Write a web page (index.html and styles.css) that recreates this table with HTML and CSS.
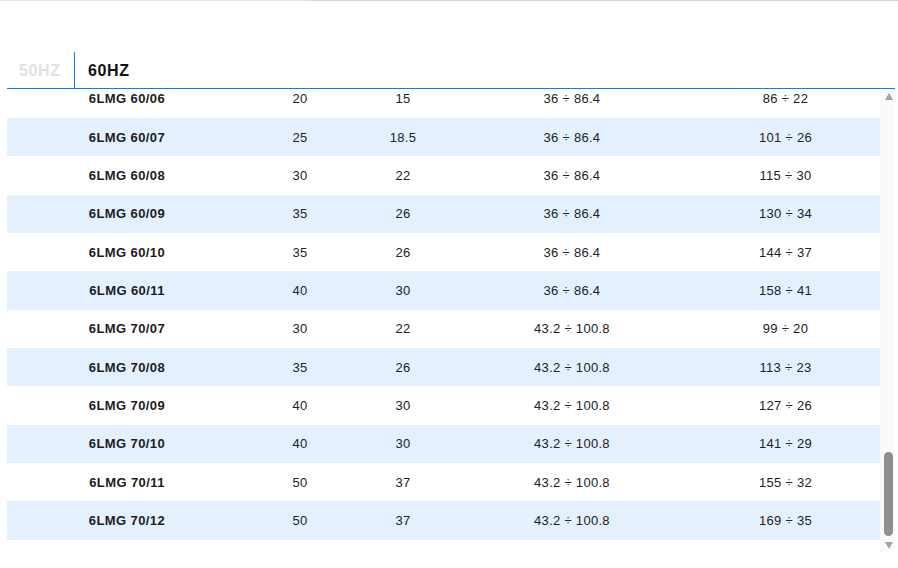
FILE: index.html
```html
<!DOCTYPE html>
<html>
<head>
<meta charset="utf-8">
<link rel="stylesheet" href="styles.css">
</head>
<body>
<div class="topbar"><div class="topbar-a"></div><div class="topbar-b"></div></div>
<div class="panel">
  <div class="tabs">
    <div class="tab tab-off">50HZ</div>
    <div class="tab tab-on">60HZ</div>
  </div>
  <div class="body">
    <div class="viewport">
      <table class="grid">
        <colgroup><col class="c1"><col class="c2"><col class="c3"><col class="c4"><col class="c5"></colgroup>
        <tbody>
          <tr><td class="name">6LMG 60/06</td><td>20</td><td>15</td><td>36 ÷ 86.4</td><td>86 ÷ 22</td></tr>
          <tr class="alt"><td class="name">6LMG 60/07</td><td>25</td><td>18.5</td><td>36 ÷ 86.4</td><td>101 ÷ 26</td></tr>
          <tr><td class="name">6LMG 60/08</td><td>30</td><td>22</td><td>36 ÷ 86.4</td><td>115 ÷ 30</td></tr>
          <tr class="alt"><td class="name">6LMG 60/09</td><td>35</td><td>26</td><td>36 ÷ 86.4</td><td>130 ÷ 34</td></tr>
          <tr><td class="name">6LMG 60/10</td><td>35</td><td>26</td><td>36 ÷ 86.4</td><td>144 ÷ 37</td></tr>
          <tr class="alt"><td class="name">6LMG 60/11</td><td>40</td><td>30</td><td>36 ÷ 86.4</td><td>158 ÷ 41</td></tr>
          <tr><td class="name">6LMG 70/07</td><td>30</td><td>22</td><td>43.2 ÷ 100.8</td><td>99 ÷ 20</td></tr>
          <tr class="alt"><td class="name">6LMG 70/08</td><td>35</td><td>26</td><td>43.2 ÷ 100.8</td><td>113 ÷ 23</td></tr>
          <tr><td class="name">6LMG 70/09</td><td>40</td><td>30</td><td>43.2 ÷ 100.8</td><td>127 ÷ 26</td></tr>
          <tr class="alt"><td class="name">6LMG 70/10</td><td>40</td><td>30</td><td>43.2 ÷ 100.8</td><td>141 ÷ 29</td></tr>
          <tr><td class="name">6LMG 70/11</td><td>50</td><td>37</td><td>43.2 ÷ 100.8</td><td>155 ÷ 32</td></tr>
          <tr class="alt"><td class="name">6LMG 70/12</td><td>50</td><td>37</td><td>43.2 ÷ 100.8</td><td>169 ÷ 35</td></tr>
        </tbody>
      </table>
    </div>
    <div class="scrollbar">
      <div class="arrow arrow-up"></div>
      <div class="track"><div class="thumb"></div></div>
      <div class="arrow arrow-down"></div>
    </div>
  </div>
</div>
</body>
</html>
```
FILE: styles.css
```css
html, body {
  margin: 0;
  padding: 0;
  background: #ffffff;
}
body {
  font-family: "Liberation Sans", Arial, sans-serif;
  color: #1f1f21;
}
.topbar {
  display: flex;
  height: 1px;
}
.topbar-a {
  width: 310px;
  background: #e3e3e3;
}
.topbar-b {
  flex: 1;
  background: #cdd8e6;
}
.panel {
  margin: 51px 3px 0 7px;
}
.tabs {
  display: flex;
  height: 36px;
  border-bottom: 1px solid #0a7df8;
}
.tab {
  display: flex;
  align-items: center;
  box-sizing: border-box;
  font-size: 16px;
  font-weight: 700;
  letter-spacing: 0.6px;
  padding-top: 1px;
}
.tab-off {
  width: 68px;
  padding-left: 12px;
  color: #dfe1e5;
  border-right: 1px solid #0a7df8;
}
.tab-on {
  padding-left: 13px;
  color: #111111;
}
.body {
  display: flex;
  height: 463px;
}
.viewport {
  width: 873px;
  overflow: hidden;
}
.grid {
  width: 873px;
  table-layout: fixed;
  border-collapse: collapse;
  margin-top: -9.33px;
}
.c1 { width: 240px; }
.c2 { width: 106px; }
.c3 { width: 100px; }
.c4 { width: 238px; }
.c5 { width: 189px; }
.grid td {
  height: 38.33px;
  padding: 0;
  text-align: center;
  vertical-align: middle;
  font-size: 13px;
  letter-spacing: 0.3px;
  color: #222226;
}
.grid td.name {
  font-weight: 700;
  color: #1c1c1e;
  letter-spacing: 0.4px;
}
.grid tr.alt td {
  background: #e4f0fd;
}
.scrollbar {
  width: 15px;
  background: #fafafa;
  display: flex;
  flex-direction: column;
  align-items: center;
  padding: 4px 0 3px 0;
  box-sizing: border-box;
}
.arrow {
  width: 0;
  height: 0;
  border-left: 4.5px solid transparent;
  border-right: 4.5px solid transparent;
  margin-left: 2px;
}
.arrow-up {
  border-bottom: 7px solid #a3a3a3;
}
.arrow-down {
  border-top: 7px solid #a3a3a3;
}
.track {
  flex: 1;
  width: 15px;
  display: flex;
  flex-direction: column;
  justify-content: flex-end;
  align-items: center;
  padding-bottom: 6px;
  box-sizing: border-box;
}
.thumb {
  width: 9px;
  height: 84px;
  margin-left: 2px;
  border-radius: 5px;
  background: #8f8f8f;
}
```
